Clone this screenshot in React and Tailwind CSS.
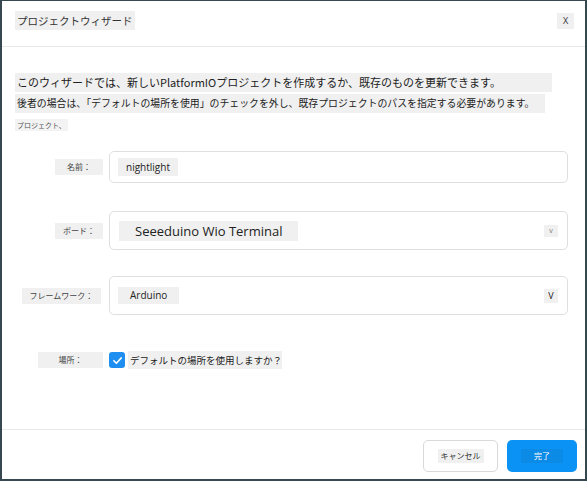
const jp = { fontFamily: '"Noto Sans CJK JP", "Noto Sans", sans-serif' };
const latin = { fontFamily: '"Open Sans", "Noto Sans", sans-serif' };

function Label({ children, width, className = "" }) {
  return (
    <div className="w-[101px] flex justify-end">
      <span
        className={`bg-[#f0f0f0] text-[8px] text-[#444] text-center leading-[16px] h-[16px] whitespace-nowrap ${className}`}
        style={{ width }}
      >
        {children}
      </span>
    </div>
  );
}

function Field({ height, children }) {
  return (
    <div
      className="ml-[6px] w-[459px] border border-[#dfdfdf] rounded-[5px] flex items-center pl-[8px] pr-[9px] justify-between"
      style={{ height }}
    >
      {children}
    </div>
  );
}

export default function App() {
  return (
    <div
      className="w-[587px] h-[481px] bg-white border-x-2 border-t border-b-2 border-[#37474f] flex flex-col text-[#222]"
      style={jp}
    >
      <header className="h-[46px] shrink-0 flex justify-between items-start pl-[13px] pr-[11px] border-b border-[#e8e8e8]">
        <h1 className="mt-[10px] h-[19px] px-[2px] bg-[#f0f0f0] text-[10.5px] leading-[19px] font-normal text-[#333]">
          プロジェクトウィザード
        </h1>
        <button className="mt-[12px] w-[17px] h-[16px] bg-[#f0f0f0] text-[9px] leading-[16px] text-[#333]" style={latin}>
          X
        </button>
      </header>

      <main className="flex-1 flex flex-col pt-[26px]">
        <div className="pl-[13px]">
          <p className="w-[537px] h-[19px] bg-[#f0f0f0] pl-[2px] text-[11px] leading-[19px] text-[#222] whitespace-nowrap">
            このウィザードでは、新しいPlatformIOプロジェクトを作成するか、既存のものを更新できます。
          </p>
          <p className="mt-[2px] w-[530px] h-[19px] bg-[#f0f0f0] pl-[2px] text-[9.9px] leading-[19px] text-[#222] whitespace-nowrap">
            後者の場合は、「デフォルトの場所を使用」のチェックを外し、既存プロジェクトのパスを指定する必要があります。
          </p>
          <p className="mt-[6px] w-[53px] h-[12px] bg-[#f3f3f3] pl-[2px] text-[7px] leading-[12px] text-[#555] whitespace-nowrap">
            プロジェクト、
          </p>
        </div>

        <div className="mt-[20px] flex items-center">
          <Label width={48}>名前：</Label>
          <Field height={32}>
            <span className="bg-[#f0f0f0] h-[18px] leading-[18px] px-[8px] text-[10px] text-[#222]" style={latin}>
              nightlight
            </span>
          </Field>
        </div>

        <div className="mt-[28px] flex items-center">
          <Label width={48}>ボード：</Label>
          <Field height={39}>
            <span className="ml-[1px] bg-[#f0f0f0] h-[20px] leading-[20px] w-[179px] pl-[16px] text-[13px] text-[#222] whitespace-nowrap" style={latin}>
              Seeeduino Wio Terminal
            </span>
            <span className="bg-[#f0f0f0] w-[14px] h-[12px] leading-[12px] text-center text-[7px] text-[#777]" style={latin}>
              v
            </span>
          </Field>
        </div>

        <div className="mt-[26px] flex items-center">
          <Label width={79} className="mr-[2px]">フレームワーク：</Label>
          <Field height={39}>
            <span className="bg-[#f0f0f0] h-[17px] leading-[17px] w-[61px] pl-[12px] text-[10px] text-[#222]" style={latin}>
              Arduino
            </span>
            <span className="bg-[#f0f0f0] w-[14px] h-[14px] leading-[14px] text-center text-[9px] text-[#222]" style={latin}>
              V
            </span>
          </Field>
        </div>

        <div className="mt-[36px] flex items-center">
          <Label width={65}>場所：</Label>
          <label className="ml-[6px] flex items-center">
            <span className="w-[16px] h-[16px] rounded-[3px] bg-[#1e8ef0] flex items-center justify-center">
              <svg width="11" height="11" viewBox="0 0 12 12" fill="none">
                <path d="M2 6.3 L4.8 9 L10 3.2" stroke="white" strokeWidth="1.8" strokeLinecap="round" strokeLinejoin="round" />
              </svg>
            </span>
            <span className="ml-[3px] bg-[#f0f0f0] h-[18px] leading-[18px] w-[154px] pl-[2px] text-[9.5px] text-[#222] whitespace-nowrap">
              デフォルトの場所を使用しますか？
            </span>
          </label>
        </div>
      </main>

      <footer className="h-[50px] shrink-0 border-t border-[#e8e8e8] flex justify-end items-start pt-[10px] pr-[8px] gap-[9px]">
        <button className="w-[75px] h-[32px] border border-[#d9d9d9] rounded-[5px] bg-white flex items-center justify-center">
          <span className="bg-[#f0f0f0] w-[46px] h-[14px] leading-[14px] text-[8px] text-[#333]">キャンセル</span>
        </button>
        <button className="w-[70px] h-[32px] rounded-[5px] bg-[#0a93f5] flex items-center justify-center">
          <span className="bg-[#0b8ae6] w-[42px] h-[14px] leading-[14px] text-[8px] text-white">完了</span>
        </button>
      </footer>
    </div>
  );
}
